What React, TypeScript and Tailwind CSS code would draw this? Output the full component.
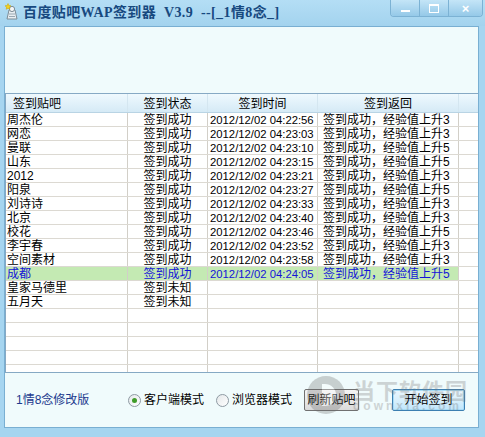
import React from "react";

const rows: { name: string; status: string; time: string; ret: string; hl?: boolean }[] = [
  { name: "周杰伦", status: "签到成功", time: "2012/12/02 04:22:56", ret: "签到成功，经验值上升3" },
  { name: "网恋", status: "签到成功", time: "2012/12/02 04:23:03", ret: "签到成功，经验值上升3" },
  { name: "曼联", status: "签到成功", time: "2012/12/02 04:23:10", ret: "签到成功，经验值上升5" },
  { name: "山东", status: "签到成功", time: "2012/12/02 04:23:15", ret: "签到成功，经验值上升5" },
  { name: "2012", status: "签到成功", time: "2012/12/02 04:23:21", ret: "签到成功，经验值上升3" },
  { name: "阳泉", status: "签到成功", time: "2012/12/02 04:23:27", ret: "签到成功，经验值上升5" },
  { name: "刘诗诗", status: "签到成功", time: "2012/12/02 04:23:33", ret: "签到成功，经验值上升3" },
  { name: "北京", status: "签到成功", time: "2012/12/02 04:23:40", ret: "签到成功，经验值上升3" },
  { name: "校花", status: "签到成功", time: "2012/12/02 04:23:46", ret: "签到成功，经验值上升5" },
  { name: "李宇春", status: "签到成功", time: "2012/12/02 04:23:52", ret: "签到成功，经验值上升3" },
  { name: "空间素材", status: "签到成功", time: "2012/12/02 04:23:58", ret: "签到成功，经验值上升3" },
  { name: "成都", status: "签到成功", time: "2012/12/02 04:24:05", ret: "签到成功，经验值上升5", hl: true },
  { name: "皇家马德里", status: "签到未知", time: "", ret: "" },
  { name: "五月天", status: "签到未知", time: "", ret: "" },
  { name: "", status: "", time: "", ret: "" },
  { name: "", status: "", time: "", ret: "" },
  { name: "", status: "", time: "", ret: "" },
  { name: "", status: "", time: "", ret: "" },
  { name: "", status: "", time: "", ret: "" },
];

function TitleIcon() {
  return (
    <svg width="16" height="18" viewBox="0 0 16 18" className="shrink-0">
      <path d="M5 7 L11 7 L13 16 L3 16 Z" fill="#e8eef2" stroke="#7d8c96" strokeWidth="1" />
      <circle cx="8" cy="6" r="2.6" fill="#f4f6f8" stroke="#7d8c96" strokeWidth="1" />
      <path d="M5 11 L11 11 M5 13.5 L11 13.5" stroke="#9aa8b2" strokeWidth="1" />
      <path d="M4 0.5 L4.9 2.6 L7 2.8 L5.4 4.2 L5.9 6.3 L4 5.2 L2.1 6.3 L2.6 4.2 L1 2.8 L3.1 2.6 Z" fill="#f5d21c" stroke="#c9a100" strokeWidth="0.5" />
    </svg>
  );
}

function Radio({ checked, label }: { checked?: boolean; label: string }) {
  return (
    <div className="flex items-center gap-[3px]">
      <div className="w-[13px] h-[13px] rounded-full border border-[#8e9aa3] bg-gradient-to-br from-[#e4e8ea] to-[#ffffff] flex items-center justify-center">
        {checked && <div className="w-[5px] h-[5px] rounded-full bg-[#3f9c2a]" />}
      </div>
      <span className="text-[12px] text-black leading-none">{label}</span>
    </div>
  );
}

export default function App() {
  return (
    <div
      className="relative w-[485px] h-[437px] overflow-hidden bg-[#a6d5f0] flex flex-col"
      style={{ fontFamily: '"Liberation Sans", "Noto Sans CJK SC", sans-serif' }}
    >
      {/* title bar */}
      <div className="h-[26px] flex items-start bg-gradient-to-b from-[#b4def5] to-[#a3d3ee]">
        <div className="flex items-center h-[24px] pl-[4px] gap-[3px]">
          <TitleIcon />
          <span
            className="text-[14px] font-bold text-[#17497f] whitespace-pre tracking-[0.4px]"
            style={{ fontFamily: '"Liberation Serif", "Noto Sans CJK SC", serif' }}
          >
            百度贴吧WAP签到器  V3.9  --[_1情8念_]
          </span>
        </div>
        <div className="ml-auto mr-[2px] flex h-[17px] border border-t-0 border-[#7cb2d4] rounded-b-[4px] overflow-hidden">
          <div className="w-[29px] flex items-center justify-center bg-gradient-to-b from-[#c4e5f7] to-[#95c9e8] border-r border-[#7cb2d4]">
            <div className="w-[9px] h-[2px] bg-white mt-[5px]" />
          </div>
          <div className="w-[29px] flex items-center justify-center bg-gradient-to-b from-[#c4e5f7] to-[#95c9e8] border-r border-[#7cb2d4]">
            <div className="w-[10px] h-[9px] border border-white border-t-[2px]" />
          </div>
          <div className="w-[33px] flex items-center justify-center bg-gradient-to-b from-[#c4e5f7] to-[#95c9e8]">
            <span className="text-white text-[13px] font-bold leading-none">×</span>
          </div>
        </div>
      </div>

      {/* client area */}
      <div className="ml-[4px] mr-[6px] h-[402px] border border-[#79afd2] bg-[#f0fbfc] flex flex-col">
        <div className="h-[66px]" />

        {/* list view */}
        <div className="h-[280px] border-t border-b border-l border-[#86a9c4] bg-white flex flex-col overflow-hidden">
          <div className="h-[19px] shrink-0 flex text-[12px] leading-[14px] text-black bg-gradient-to-b from-[#eff9fe] to-[#d5eaf6] border-b border-[#b9d4e4]">
            <div className="w-[122px] pl-[7px] pt-[3px] border-r border-[#d4e6f0]">签到贴吧</div>
            <div className="w-[80px] pt-[3px] text-center border-r border-[#d4e6f0]">签到状态</div>
            <div className="w-[110px] pt-[3px] text-center border-r border-[#d4e6f0]">签到时间</div>
            <div className="w-[141px] pt-[3px] text-center border-r border-[#d4e6f0]">签到返回</div>
            <div className="flex-1" />
          </div>
          {rows.map((r, i) => (
            <div key={i} className="h-[14px] shrink-0 flex text-[12px] leading-[15px] border-b border-[#dcd9d2] overflow-hidden">
              <div className={`flex w-[453px] ${r.hl ? "bg-[#c4eab3] text-[#1414d8]" : "text-black"}`}>
                <div className="w-[122px] pl-[1px] border-r border-[#d2cfc8] whitespace-nowrap overflow-hidden">{r.name}</div>
                <div className="w-[80px] text-center border-r border-[#d2cfc8] whitespace-nowrap">{r.status}</div>
                <div className="w-[110px] pl-[2px] text-[11.3px] border-r border-[#d2cfc8] whitespace-nowrap">{r.time}</div>
                <div className="w-[141px] pl-[5px] border-r border-[#d2cfc8] whitespace-nowrap overflow-hidden">{r.ret}</div>
              </div>
              <div className="flex-1" />
            </div>
          ))}
        </div>

        {/* footer */}
        <div className="flex-1 flex items-center pl-[11px]">
          <div className="w-[112px] text-[12px] text-[#1c3a8e]">1情8念修改版</div>
          <div className="w-[88px]">
            <Radio checked label="客户端模式" />
          </div>
          <div className="w-[88px]">
            <Radio label="浏览器模式" />
          </div>
          <button className="w-[55px] h-[22px] border border-[#707070] rounded-[2px] bg-gradient-to-b from-[#f4f4f4] via-[#e9e9e9] to-[#dadada] text-[12px] text-black">
            刷新贴吧
          </button>
          <button className="ml-[33px] w-[73px] h-[22px] border border-[#3c7fb1] rounded-[2px] bg-gradient-to-b from-[#eaf6fd] via-[#d9f0fc] to-[#bee6fd] text-[12px] text-black shadow-[inset_0_0_0_1px_#a8dcf6]">
            开始签到
          </button>
        </div>
      </div>

      {/* watermark overlay */}
      <div className="absolute left-[307px] top-[376px] flex items-center gap-[8px] opacity-30 pointer-events-none">
        <div className="w-[38px] h-[38px] rounded-full bg-[#6b6b6b] flex items-center justify-center">
          <div className="w-[14px] h-[22px] bg-white rounded-r-full ml-[6px]" />
        </div>
        <div className="flex flex-col items-start">
          <span className="text-[22px] font-bold text-[#7a7a7a] leading-[22px] tracking-[1px]" style={{ fontFamily: '"Noto Sans CJK SC", sans-serif' }}>当下软件园</span>
          <span className="text-[12px] font-bold text-[#7a7a7a] leading-[12px] tracking-[3px]">downxia.com</span>
        </div>
      </div>
    </div>
  );
}
